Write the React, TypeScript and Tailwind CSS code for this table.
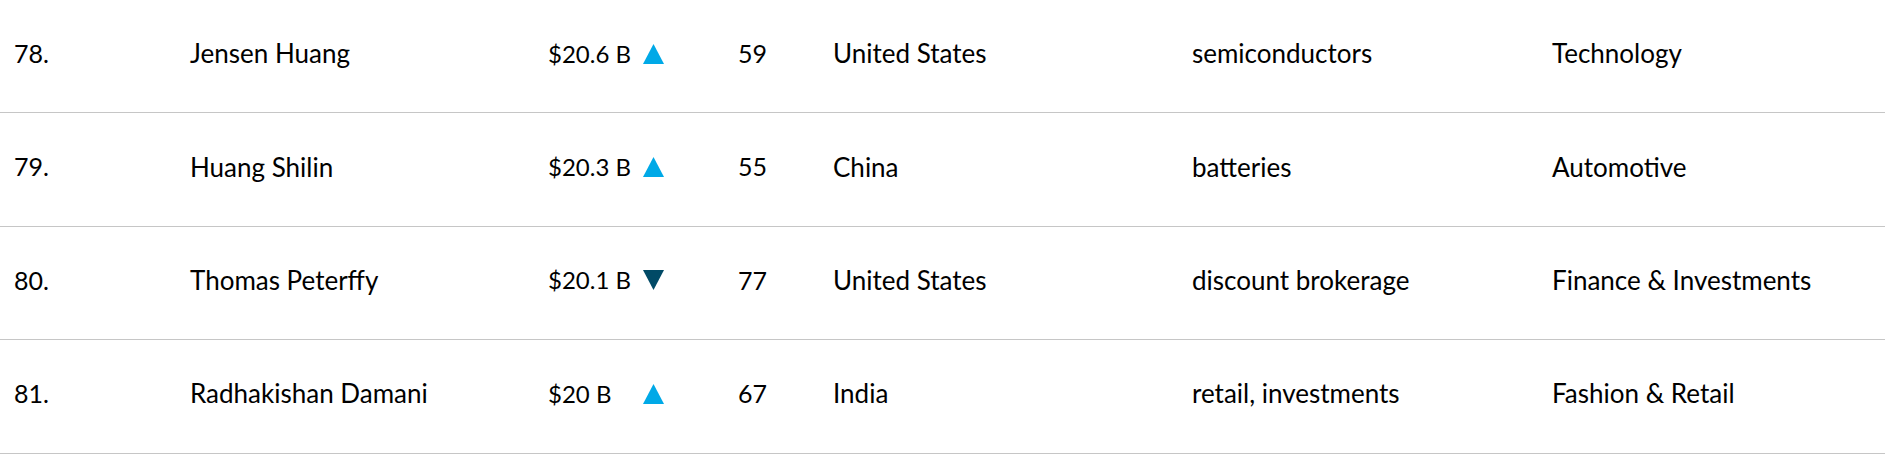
type Row = {
  rank: string;
  name: string;
  worth: string;
  up: boolean;
  age: string;
  country: string;
  source: string;
  industry: string;
};

const rows: Row[] = [
  { rank: "78.", name: "Jensen Huang", worth: "$20.6 B", up: true, age: "59", country: "United States", source: "semiconductors", industry: "Technology" },
  { rank: "79.", name: "Huang Shilin", worth: "$20.3 B", up: true, age: "55", country: "China", source: "batteries", industry: "Automotive" },
  { rank: "80.", name: "Thomas Peterffy", worth: "$20.1 B", up: false, age: "77", country: "United States", source: "discount brokerage", industry: "Finance & Investments" },
  { rank: "81.", name: "Radhakishan Damani", worth: "$20 B", up: true, age: "67", country: "India", source: "retail, investments", industry: "Fashion & Retail" },
];

const Arrow = ({ up }: { up: boolean }) => (
  <svg width="21" height="20" viewBox="0 0 21 20" className="block">
    {up ? (
      <polygon points="10.5,0 21,20 0,20" fill="#00a9e7" />
    ) : (
      <polygon points="0,0 21,0 10.5,20" fill="#014a66" />
    )}
  </svg>
);

export default function App() {
  return (
    <div className="w-[1885px] h-[455px] bg-white font-['Lato',sans-serif] text-[26px] text-black">
      {rows.map((r) => (
        <div
          key={r.rank}
          className="grid grid-cols-[176px_358px_95px_95px_95px_359px_360px_1fr] items-center h-[113.4px] pl-[14px] border-b border-[#c6c6c6] pb-[5px]"
        >
          <div className="text-[25px]">{r.rank}</div>
          <div>{r.name}</div>
          <div className="text-[24px]">{r.worth}</div>
          <div className="flex items-center">
            <Arrow up={r.up} />
          </div>
          <div className="text-[25px]">{r.age}</div>
          <div>{r.country}</div>
          <div>{r.source}</div>
          <div>{r.industry}</div>
        </div>
      ))}
    </div>
  );
}
